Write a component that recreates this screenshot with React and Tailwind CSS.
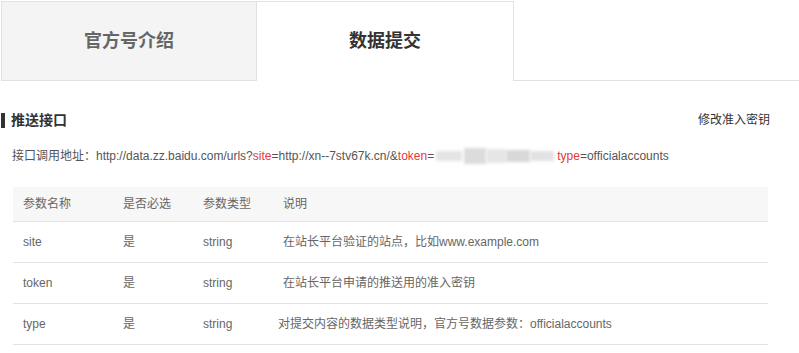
import React from "react";

const rows = [
  { name: "site", req: "是", type: "string", desc: "在站长平台验证的站点，比如www.example.com", shift: false },
  { name: "token", req: "是", type: "string", desc: "在站长平台申请的推送用的准入密钥", shift: false },
  { name: "type", req: "是", type: "string", desc: "对提交内容的数据类型说明，官方号数据参数：officialaccounts", shift: true },
];

export default function App() {
  return (
    <div
      className="w-[799px] h-[353px] bg-white overflow-hidden"
      style={{ fontFamily: '"Liberation Sans", Arial, "Noto Sans CJK SC", sans-serif' }}
    >
      {/* Tabs */}
      <div className="flex pt-px pl-px">
        <div className="w-[256px] h-[80px] bg-[#f4f4f4] border border-[#e2e2e2] flex items-center justify-center text-[18px] font-bold text-[#666]">
          官方号介绍
        </div>
        <div className="w-[257px] h-[80px] bg-white border-t border-r border-[#e2e2e2] flex items-center justify-center text-[18px] font-bold text-[#333]">
          数据提交
        </div>
        <div className="flex-1 h-[80px] border-b border-[#e2e2e2]"></div>
      </div>

      {/* Section header */}
      <div className="flex items-center justify-between mt-[30px] pr-[29px]">
        <div className="flex items-center">
          <div className="w-[4px] h-[15px] bg-[#333] ml-px"></div>
          <div className="ml-[6px] text-[14px] font-bold text-[#333] leading-[18px]">推送接口</div>
        </div>
        <div className="text-[12px] text-[#333]">修改准入密钥</div>
      </div>

      {/* URL */}
      <div className="mt-[19px] ml-[12px] text-[12px] text-[#555] flex items-center h-[16px] whitespace-nowrap">
        <span>接口调用地址：</span>
        <span>http://data.zz.baidu.com/urls?</span>
        <span className="text-[#e4393c]">site</span>
        <span>=http://xn--7stv67k.cn/&amp;</span>
        <span className="text-[#e4393c]">token</span>
        <span>=</span>
        <span className="relative w-[123px] h-[16px]">
          <span className="absolute left-[2px] top-[3px] w-[26px] h-[10px] bg-[#e4e4e4] blur-[1.5px]"></span>
          <span className="absolute left-[30px] top-[0px] w-[22px] h-[16px] bg-[#dcdcdc] blur-[1.5px]"></span>
          <span className="absolute left-[52px] top-[1px] w-[20px] h-[14px] bg-[#e6e6e6] blur-[1.5px]"></span>
          <span className="absolute left-[72px] top-[2px] w-[24px] h-[12px] bg-[#d8d8d8] blur-[1.5px]"></span>
          <span className="absolute left-[96px] top-[3px] w-[24px] h-[10px] bg-[#e2e2e2] blur-[1.5px]"></span>
        </span>
        <span className="text-[#e4393c]">type</span>
        <span>=officialaccounts</span>
      </div>

      {/* Table */}
      <div className="mt-[23px] ml-[13px] w-[755px] text-[12px] text-[#666]">
        <div className="flex items-center h-[35px] bg-[#f7f7f7] border-b border-[#e3e3e3]">
          <div className="w-[110px] pl-[10px]">参数名称</div>
          <div className="w-[80px]">是否必选</div>
          <div className="w-[80px]">参数类型</div>
          <div>说明</div>
        </div>
        {rows.map((r) => (
          <div key={r.name} className="flex items-center h-[41px] border-b border-[#e3e3e3]">
            <div className="w-[110px] pl-[10px]">{r.name}</div>
            <div className="w-[80px]">{r.req}</div>
            <div className="w-[80px]">{r.type}</div>
            <div className={r.shift ? "-ml-[5px]" : ""}>{r.desc}</div>
          </div>
        ))}
      </div>
    </div>
  );
}
